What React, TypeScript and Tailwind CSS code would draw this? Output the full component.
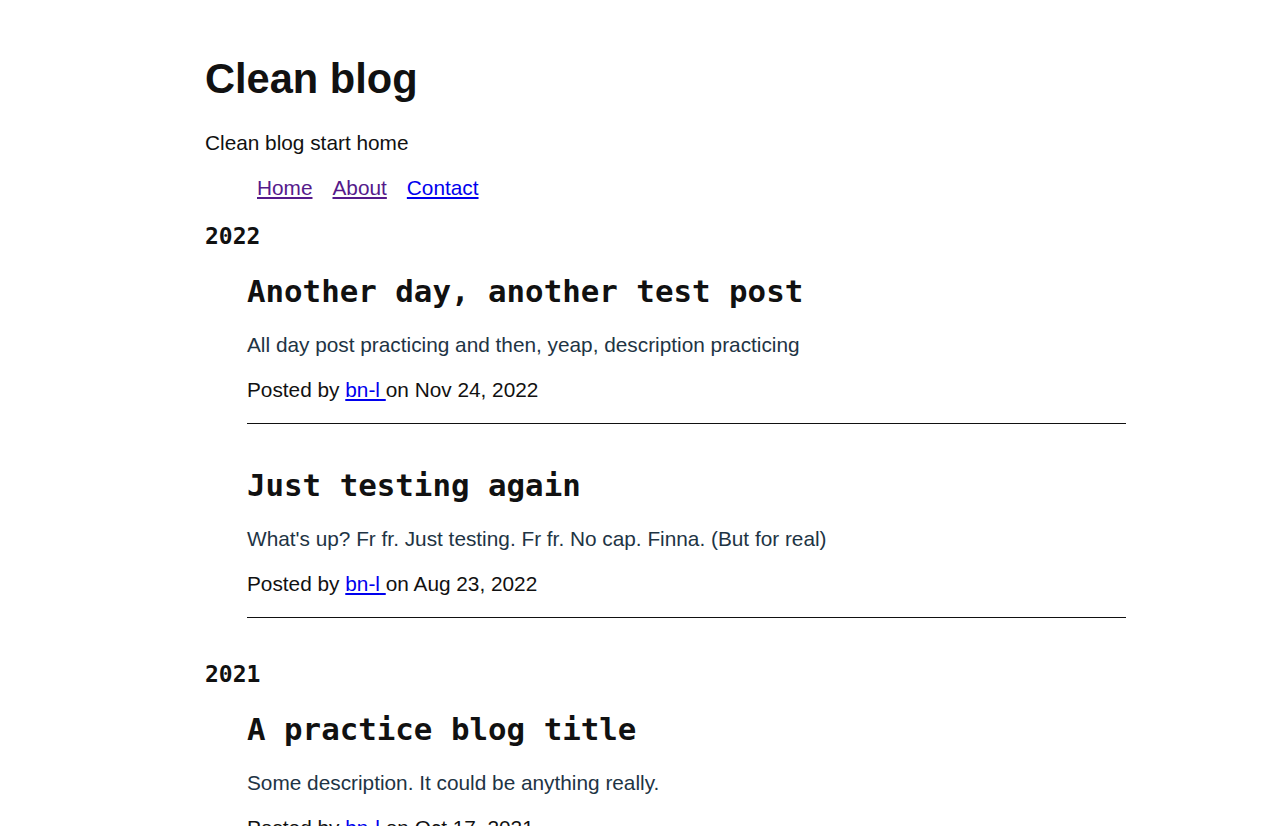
import React from 'react';

type Post = {
  title: string;
  description: string;
  date: string;
};

const years: { year: string; posts: Post[] }[] = [
  {
    year: '2022',
    posts: [
      {
        title: 'Another day, another test post',
        description: 'All day post practicing and then, yeap, description practicing',
        date: 'Nov 24, 2022',
      },
      {
        title: 'Just testing again',
        description: "What's up? Fr fr. Just testing. Fr fr. No cap. Finna. (But for real)",
        date: 'Aug 23, 2022',
      },
    ],
  },
  {
    year: '2021',
    posts: [
      {
        title: 'A practice blog title',
        description: 'Some description. It could be anything really.',
        date: 'Oct 17, 2021',
      },
    ],
  },
];

const sans = "font-['Liberation_Sans',Arial,sans-serif]";
const mono = "font-['DejaVu_Sans_Mono',monospace]";

export default function App() {
  return (
    <div className={`min-h-screen bg-white text-[#111] ${sans}`}>
      <div className="pl-[205px] pt-[55px]">
        <h1 className="text-[41.6px] leading-[48px] font-bold">Clean blog</h1>

        <p className="mt-[28px] text-[20.8px] leading-[24px]">Clean blog start home</p>

        <nav className="mt-[21px] pl-[42px] text-[20.8px] leading-[24px]">
          <a href="#" className="mx-[10px] underline text-[#551a8b]">Home</a>
          <a href="#" className="mx-[10px] underline text-[#551a8b]">About</a>
          <a href="#" className="mx-[10px] underline text-[#0000ee]">Contact</a>
        </nav>

        {years.map((group, gi) => (
          <section key={group.year} className={gi === 0 ? 'mt-[22px]' : 'mt-[42px]'}>
            <h2 className={`${mono} font-bold text-[23px] leading-[28px]`}>{group.year}</h2>

            <ul className="pl-[42px]">
              {group.posts.map((post, pi) => (
                <li key={post.title} className={pi === 0 ? 'mt-[23px]' : 'mt-[43px]'}>
                  <h3 className={`${mono} font-bold text-[30.8px] leading-[36px]`}>{post.title}</h3>

                  <p className="mt-[24px] text-[20.8px] leading-[24px] text-[#1e3444]">
                    {post.description}
                  </p>

                  <p className="mt-[21px] text-[20.8px] leading-[24px]">
                    Posted by{' '}
                    <a href="#" className="underline text-[#0000ee]">
                      bn-l{' '}
                    </a>
                    on {post.date}
                  </p>

                  <hr className="mt-[21px] w-[879px] border-t border-[#111]" />
                </li>
              ))}
            </ul>
          </section>
        ))}
      </div>
    </div>
  );
}
